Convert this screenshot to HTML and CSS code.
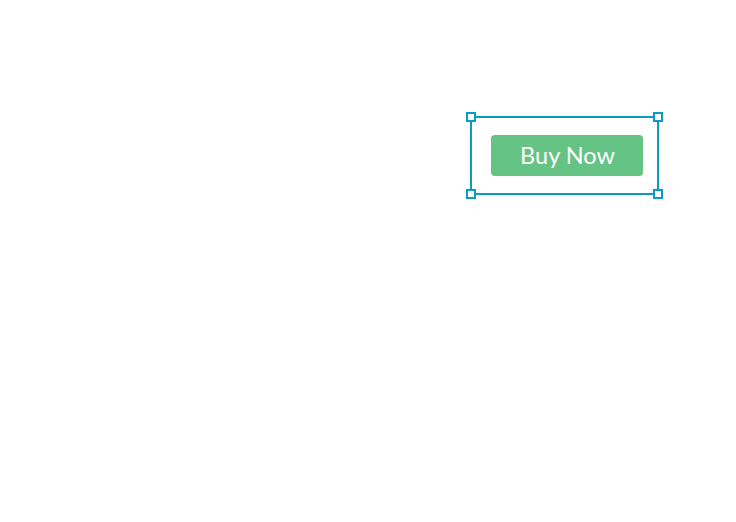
FILE: index.html
```html
<!DOCTYPE html>
<html>
<head>
<meta charset="utf-8">
<link rel="stylesheet" href="styles.css">
</head>
<body>
<div class="canvas">
  <div class="frame">
    <span class="handle tl"></span>
    <span class="handle tr"></span>
    <span class="handle bl"></span>
    <span class="handle br"></span>
    <button class="buy">Buy Now</button>
  </div>
</div>
</body>
</html>
```
FILE: styles.css
```css
html, body {
  margin: 0;
  padding: 0;
  background: #ffffff;
  width: 736px;
  height: 522px;
  overflow: hidden;
}
.canvas {
  padding: 116px 0 0 470px;
}
.frame {
  position: relative;
  box-sizing: border-box;
  width: 189px;
  height: 79px;
  border: 2px solid #0a9ac4;
  padding: 17px 0 0 19px;
}
.handle {
  position: absolute;
  box-sizing: border-box;
  width: 10px;
  height: 10px;
  background: #ffffff;
  border: 2px solid #0a9ac4;
}
.handle.tl { left: -6px; top: -6px; }
.handle.tr { right: -6px; top: -6px; }
.handle.bl { left: -6px; bottom: -6px; }
.handle.br { right: -6px; bottom: -6px; }
.buy {
  display: block;
  box-sizing: border-box;
  width: 152px;
  height: 41px;
  border: none;
  border-radius: 4px;
  background: #66c386;
  color: #ffffff;
  font-family: Lato, "Noto Sans", sans-serif;
  font-size: 23.5px;
  padding: 0 0 0 1px;
  line-height: 41px;
  text-align: center;
}
```
